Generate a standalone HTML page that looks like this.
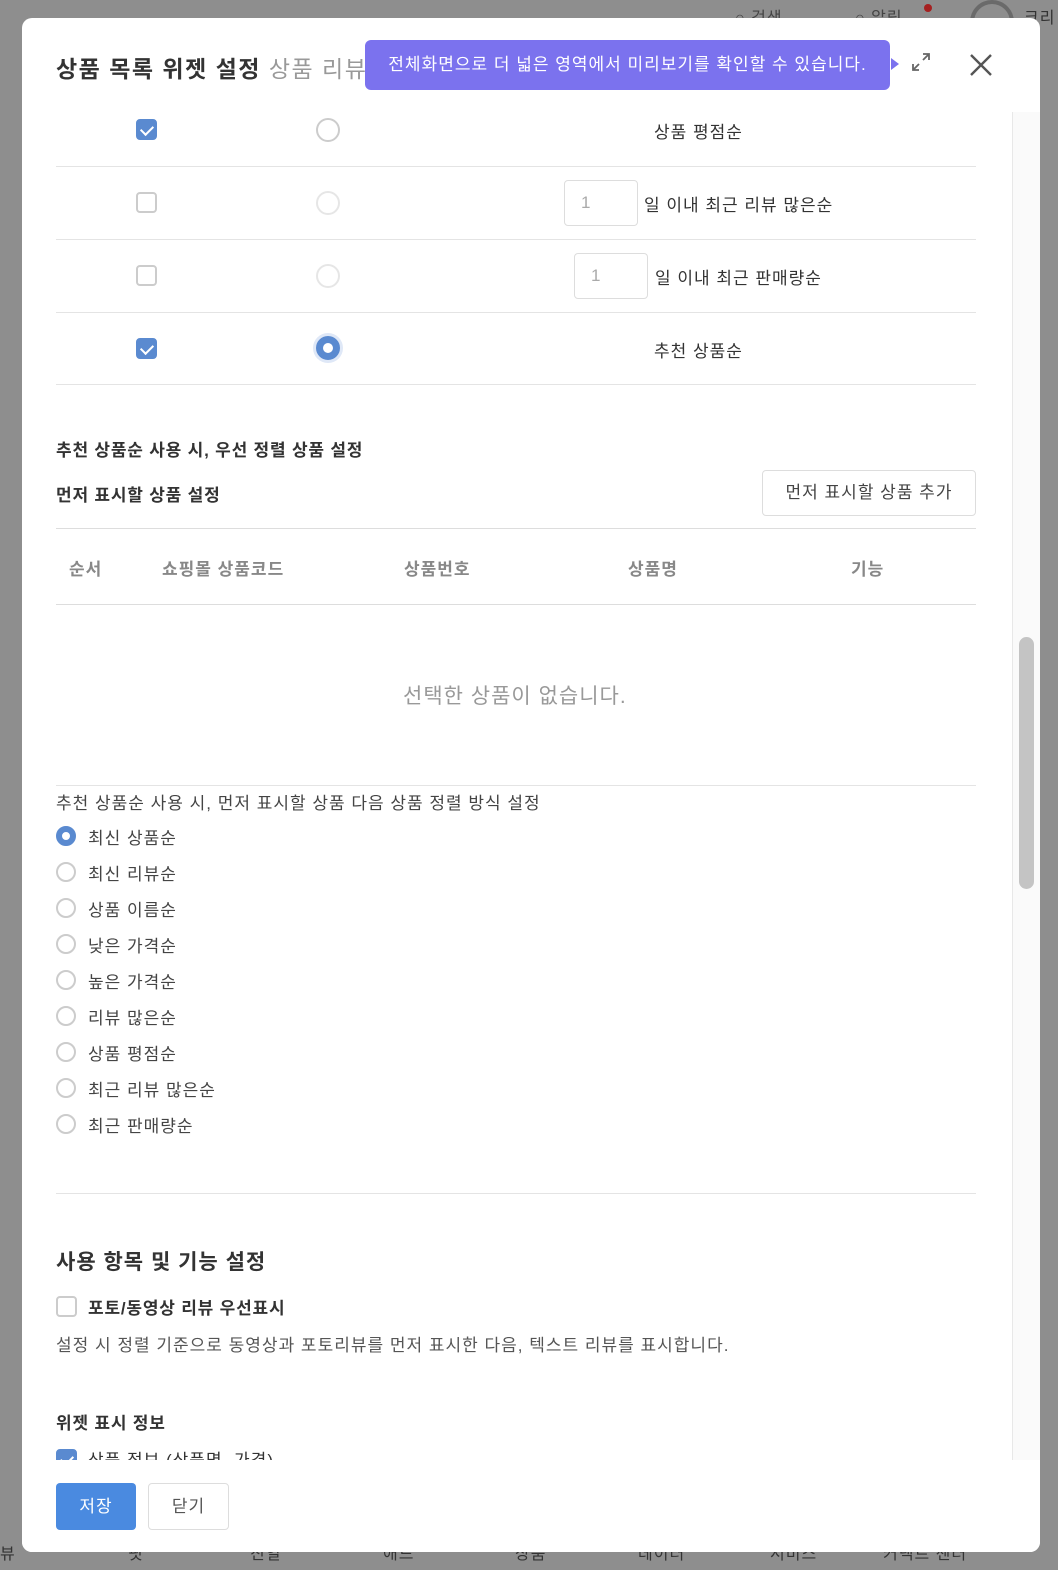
<!DOCTYPE html>
<html><head><meta charset="utf-8"><style>
*{box-sizing:border-box;margin:0;padding:0}
body{width:1058px;height:1570px;background:#8e8e8e;font-family:"Liberation Sans","Noto Sans CJK KR",sans-serif;position:relative;overflow:hidden;color:#333;letter-spacing:1px}
.modal{position:absolute;left:22px;top:18px;width:1018px;height:1534px;background:#fff;border-radius:10px;overflow:hidden}
.abs{position:absolute}
.title{left:34px;top:32px;font-size:23px;font-weight:bold;color:#333;letter-spacing:1.5px}
.title span{font-weight:normal;color:#999}
.tip{left:343px;top:22px;width:525px;height:50px;background:#7b72ee;border-radius:6px;color:#fff;font-size:17px;line-height:50px;text-align:center}
.tiparrow{left:869px;top:40px;border-left:8px solid #7b72ee;border-top:6px solid transparent;border-bottom:6px solid transparent}
.line{height:1px;background:#e4e4e4}
.cb{width:21px;height:21px;border-radius:4px;border:2px solid #ccc;background:#fff}
.cb.on{background:#5a8ad0;border-color:#5a8ad0}
.cb.on:after{content:"";position:absolute;left:5px;top:2px;width:6px;height:10px;border:solid #fff;border-width:0 2.5px 2.5px 0;transform:rotate(45deg)}
.rd{width:24px;height:24px;border-radius:50%;border:2px solid #ccc}
.rd.light{border-color:#e6e6e6}
.rd.on{border:7px solid #5a8ad0;box-shadow:0 0 0 3px #dfe8f7}
.inp{width:74px;height:46px;border:1px solid #ddd;border-radius:4px;font-size:17px;color:#aaa;line-height:44px;padding-left:16px}
.t17{font-size:17px}
.sr{width:20px;height:20px;border-radius:50%;border:2px solid #ccc}
.sr.on{border:6px solid #5a8ad0}
.opt{font-size:17px;color:#444}
</style></head><body>
<div class="abs" style="left:735px;top:4px;font-size:16px;color:#444">○ 검색</div>
<div class="abs" style="left:855px;top:4px;font-size:16px;color:#444">○ 알림</div>
<div class="abs" style="left:924px;top:4px;width:8px;height:8px;border-radius:50%;background:#a52020"></div>
<div class="abs" style="left:970px;top:0;width:44px;height:22px;border:4px solid #6a6a6a;border-bottom:none;border-radius:22px 22px 0 0"></div>
<div class="abs" style="left:1024px;top:4px;font-size:16px;color:#333">크리</div>
<div class="abs" style="left:0;top:1540px;width:1058px;font-size:16px;color:#333">
<span class="abs" style="left:0">뷰</span><span class="abs" style="left:128px">핏</span><span class="abs" style="left:250px">진열</span><span class="abs" style="left:383px">애드</span><span class="abs" style="left:515px">상품</span><span class="abs" style="left:638px">데이터</span><span class="abs" style="left:770px">서비스</span><span class="abs" style="left:883px">커넥트 센터</span></div>

<div class="modal">
<div class="abs title">상품 목록 위젯 설정 <span>상품 리뷰</span></div>
<svg class="abs" style="left:888px;top:33px" width="22" height="22" viewBox="0 0 22 22"><path d="M13 3H19V9M19 3L13 9M9 19H3V13M3 19L9 13" stroke="#666" stroke-width="1.8" fill="none"/></svg>
<svg class="abs" style="left:947px;top:35px" width="24" height="24" viewBox="0 0 24 24"><path d="M2 2L22 22M22 2L2 22" stroke="#555" stroke-width="2.4"/></svg>
<div class="abs tip">전체화면으로 더 넓은 영역에서 미리보기를 확인할 수 있습니다.</div>
<div class="abs tiparrow"></div>

<div class="abs" style="left:990px;top:94px;width:28px;height:1348px;background:#fafafa;border-left:1px solid #e8e8e8"></div>
<div class="abs" style="left:997px;top:619px;width:15px;height:252px;background:#c4c4c4;border-radius:8px"></div>

<div class="abs cb on" style="left:114px;top:101px"></div>
<div class="abs rd" style="left:294px;top:100px"></div>
<div class="abs t17" style="left:632px;top:100px">상품 평점순</div>
<div class="abs line" style="left:34px;top:148px;width:920px"></div>
<div class="abs cb" style="left:114px;top:174px"></div>
<div class="abs rd light" style="left:294px;top:173px"></div>
<div class="abs inp" style="left:542px;top:162px">1</div>
<div class="abs t17" style="left:622px;top:173px">일 이내 최근 리뷰 많은순</div>
<div class="abs line" style="left:34px;top:221px;width:920px"></div>
<div class="abs cb" style="left:114px;top:247px"></div>
<div class="abs rd light" style="left:294px;top:246px"></div>
<div class="abs inp" style="left:552px;top:235px">1</div>
<div class="abs t17" style="left:633px;top:246px">일 이내 최근 판매량순</div>
<div class="abs line" style="left:34px;top:294px;width:920px"></div>
<div class="abs cb on" style="left:114px;top:320px"></div>
<div class="abs rd on" style="left:294px;top:318px"></div>
<div class="abs t17" style="left:632px;top:319px">추천 상품순</div>
<div class="abs line" style="left:34px;top:366px;width:920px"></div>

<div class="abs t17" style="left:34px;top:418px;font-weight:bold;letter-spacing:0.8px">추천 상품순 사용 시, 우선 정렬 상품 설정</div>
<div class="abs t17" style="left:34px;top:463px;font-weight:bold;letter-spacing:0.8px">먼저 표시할 상품 설정</div>
<div class="abs t17" style="left:740px;top:452px;width:214px;height:46px;border:1px solid #ddd;border-radius:4px;text-align:center;line-height:44px;color:#444">먼저 표시할 상품 추가</div>
<div class="abs line" style="left:34px;top:510px;width:920px;background:#ddd"></div>
<div class="abs t17" style="left:34px;top:537px;width:920px;color:#888;font-weight:bold">
<span class="abs" style="left:13px">순서</span><span class="abs" style="left:106px">쇼핑몰 상품코드</span><span class="abs" style="left:348px">상품번호</span><span class="abs" style="left:572px">상품명</span><span class="abs" style="left:795px">기능</span></div>
<div class="abs line" style="left:34px;top:586px;width:920px;background:#ddd"></div>
<div class="abs" style="left:381px;top:662px;font-size:21px;color:#999">선택한 상품이 없습니다.</div>
<div class="abs line" style="left:34px;top:767px;width:920px"></div>

<div class="abs t17" style="left:34px;top:771px;color:#444">추천 상품순 사용 시, 먼저 표시할 상품 다음 상품 정렬 방식 설정</div>
<div class="abs sr on" style="left:34px;top:808px"></div><div class="abs opt" style="left:66px;top:806px">최신 상품순</div>
<div class="abs sr" style="left:34px;top:844px"></div><div class="abs opt" style="left:66px;top:842px">최신 리뷰순</div>
<div class="abs sr" style="left:34px;top:880px"></div><div class="abs opt" style="left:66px;top:878px">상품 이름순</div>
<div class="abs sr" style="left:34px;top:916px"></div><div class="abs opt" style="left:66px;top:914px">낮은 가격순</div>
<div class="abs sr" style="left:34px;top:952px"></div><div class="abs opt" style="left:66px;top:950px">높은 가격순</div>
<div class="abs sr" style="left:34px;top:988px"></div><div class="abs opt" style="left:66px;top:986px">리뷰 많은순</div>
<div class="abs sr" style="left:34px;top:1024px"></div><div class="abs opt" style="left:66px;top:1022px">상품 평점순</div>
<div class="abs sr" style="left:34px;top:1060px"></div><div class="abs opt" style="left:66px;top:1058px">최근 리뷰 많은순</div>
<div class="abs sr" style="left:34px;top:1096px"></div><div class="abs opt" style="left:66px;top:1094px">최근 판매량순</div>

<div class="abs line" style="left:34px;top:1175px;width:920px"></div>
<div class="abs" style="left:34px;top:1228px;font-size:21px;font-weight:bold">사용 항목 및 기능 설정</div>
<div class="abs cb" style="left:34px;top:1278px"></div>
<div class="abs t17" style="left:66px;top:1276px;font-weight:bold;letter-spacing:0.8px">포토/동영상 리뷰 우선표시</div>
<div class="abs t17" style="left:34px;top:1313px;color:#555">설정 시 정렬 기준으로 동영상과 포토리뷰를 먼저 표시한 다음, 텍스트 리뷰를 표시합니다.</div>
<div class="abs t17" style="left:34px;top:1391px;font-weight:bold;letter-spacing:0.8px">위젯 표시 정보</div>
<div class="abs" style="left:0;top:1431px;width:990px;height:11px;overflow:hidden">
<div class="abs cb on" style="left:34px;top:0"></div>
<div class="abs t17" style="left:66px;top:-3px">상품 정보 (상품명, 가격)</div></div>
<div class="abs" style="left:0;top:1442px;width:1018px;height:92px;background:#fff"></div>

<div class="abs" style="left:34px;top:1465px;width:80px;height:47px;background:#4a8ae0;border-radius:4px;color:#fff;font-size:17px;text-align:center;line-height:47px">저장</div>
<div class="abs" style="left:126px;top:1465px;width:81px;height:47px;border:1px solid #ddd;border-radius:4px;color:#555;font-size:17px;text-align:center;line-height:45px">닫기</div>
</div>
</body></html>
